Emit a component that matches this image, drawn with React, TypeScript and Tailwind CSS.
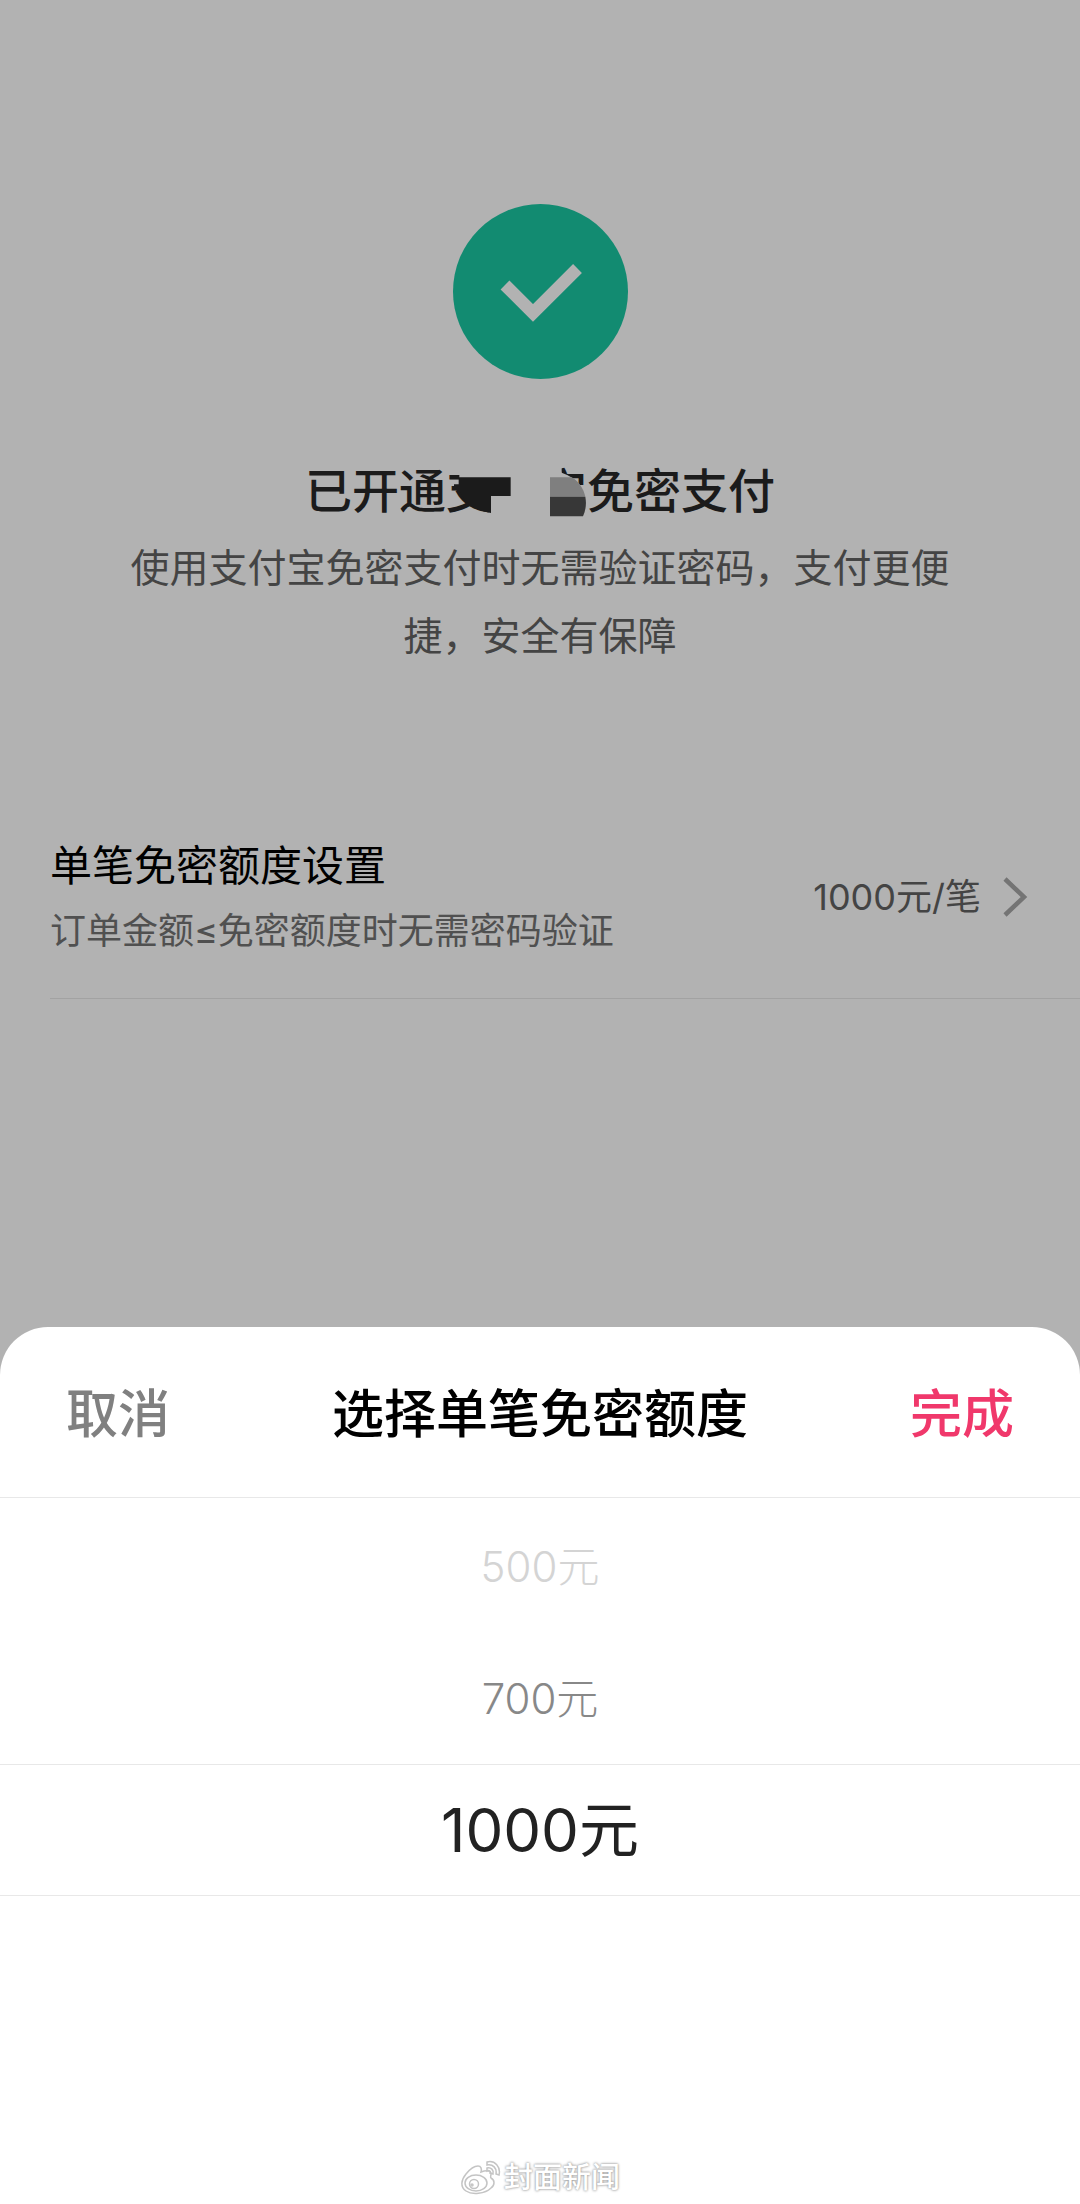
import { useState } from 'react';

const LIMITS = [500, 700, 1000];

// Rows shown in the wheel, as offsets from the selected one.
const WHEEL_OFFSETS = [-2, -1, 0, 1, 2];

export default function App() {
  const [selected, setSelected] = useState(2);

  return (
    <div className="relative min-h-screen bg-white font-[Inter,'Noto_Sans_CJK_SC',sans-serif]">
      <main>
        <section className="flex flex-col items-center px-32 pt-51 text-center">
          <SuccessIcon />
          <div className="relative mt-[77px]">
            <h1 className="text-[47px] leading-[70px] font-medium text-[#282828]">
              已开通支付宝免密支付
            </h1>
            <TitleMask />
          </div>
          <p className="mt-2 text-[39px] leading-[68px] text-[#626262]">
            使用支付宝免密支付时无需验证密码，支付更便捷，安全有保障
          </p>
        </section>

        <button
          type="button"
          className="mt-[162px] ml-[50px] flex w-[calc(100%-50px)] items-center justify-between border-b border-[#e8e8e8] pr-[52px] pb-9 text-left"
        >
          <span className="flex flex-col">
            <span className="text-[42px] leading-[68px] text-black">
              单笔免密额度设置
            </span>
            <span className="text-[36px] leading-[62px] text-[#737373]">
              订单金额≤免密额度时无需密码验证
            </span>
          </span>
          <span className="flex items-center gap-[22px] text-[36px] leading-[62px] text-[#626262]">
            {LIMITS[2]}元/笔
            <ChevronIcon />
          </span>
        </button>
      </main>

      <div className="fixed inset-0 flex items-end bg-black/30">
        <div
          role="dialog"
          aria-labelledby="sheet-title"
          className="w-full rounded-t-[48px] bg-white"
        >
          <header className="flex items-center justify-between border-b border-[#e8e8e8] px-[66px] pt-[50px] pb-11 text-[52px] leading-[76px] font-medium">
            <button type="button" className="text-[#808080]">
              取消
            </button>
            <h2 id="sheet-title" className="text-black">
              选择单笔免密额度
            </h2>
            <button type="button" className="text-[#f0386b]">
              完成
            </button>
          </header>

          <div role="group" aria-label="单笔免密额度" className="pt-0.5">
            {WHEEL_OFFSETS.map((offset) => (
              <WheelRow
                key={offset}
                offset={offset}
                value={LIMITS[selected + offset]}
                onSelect={() => setSelected(selected + offset)}
              />
            ))}
          </div>

          <footer className="flex h-11 items-center justify-center gap-[2px] pb-2">
            <WeiboIcon />
            <span className="text-[29px] leading-9 font-medium text-white [text-shadow:0_0_3px_#999,0_0_2px_#aaa]">
              封面新闻
            </span>
          </footer>
        </div>
      </div>
    </div>
  );
}

function WheelRow({
  offset,
  value,
  onSelect,
}: {
  offset: number;
  value: number | undefined;
  onSelect: () => void;
}) {
  if (value === undefined) return <div className="h-33" />;

  const distance = Math.abs(offset);
  const tone =
    distance === 0
      ? 'border-y border-[#e8e8e8] text-[60px] text-[#222]'
      : distance === 1
        ? 'text-[42px] font-light text-[#888]'
        : 'text-[42px] font-light text-[#d4d4d4]';

  return (
    <button
      type="button"
      aria-pressed={distance === 0}
      onClick={onSelect}
      className={`block h-33 w-full text-center ${tone}`}
    >
      {value}元
    </button>
  );
}

function SuccessIcon() {
  return (
    <svg viewBox="0 0 175 175" className="size-[175px]" aria-hidden="true">
      <circle cx="87.5" cy="87.5" r="87.5" fill="#1bc8a3" />
      <path
        d="M52 81 80 109 124.5 64.5"
        fill="none"
        stroke="#fff"
        strokeWidth="12.5"
      />
    </svg>
  );
}

// Blot over the middle characters of the heading.
function TitleMask() {
  return (
    <svg
      viewBox="45 18 1410 210"
      className="absolute inset-0 size-full"
      aria-hidden="true"
    >
      <path
        d="M508 18H815V68C862 84 888 118 888 158C888 176 884 190 878 215H603V188C555 176 508 146 508 83Z"
        fill="#fff"
      />
      <path
        d="M506 82H662V138H603V189C588 186 562 180 545 168C526 158 512 136 504 115L492 110V103H506Z"
        fill="#272727"
      />
      <path d="M780 82H845C868 96 880 116 886 140H780Z" fill="#b6b6b6" />
      <path d="M780 140H886C890 162 887 182 879 199H780Z" fill="#505050" />
    </svg>
  );
}

function ChevronIcon() {
  return (
    <svg viewBox="0 0 25 40" className="h-10 w-[25px]" aria-hidden="true">
      <path
        d="M2 2 21 20 2 38"
        fill="none"
        stroke="#a6a6a6"
        strokeWidth="4.5"
      />
    </svg>
  );
}

function WeiboIcon() {
  return (
    <svg
      viewBox="0 0 42 36"
      className="h-9 w-[42px]"
      fill="none"
      stroke="#c4c4c4"
      strokeWidth="1.5"
      aria-hidden="true"
    >
      <path d="M18 6C21 6 22 9 21 12C26 10 31 10 31 14C31 16 30 17 31 18C35 20 35 25 31 28C25 34 12 35 6 31C0 27 1 20 6 14C10 9 14 6 18 6Z" />
      <ellipse cx="16" cy="23" rx="11" ry="8" />
      <circle cx="14" cy="24" r="4.5" />
      <circle cx="12" cy="25" r="1" />
      <path d="M27 2C35 0 41 7 39 15L36 14C37 8 33 4 27 5Z" />
      <path d="M27 8C31 7 34 10 33 14L30 13C31 11 29 10 27 11Z" />
    </svg>
  );
}
